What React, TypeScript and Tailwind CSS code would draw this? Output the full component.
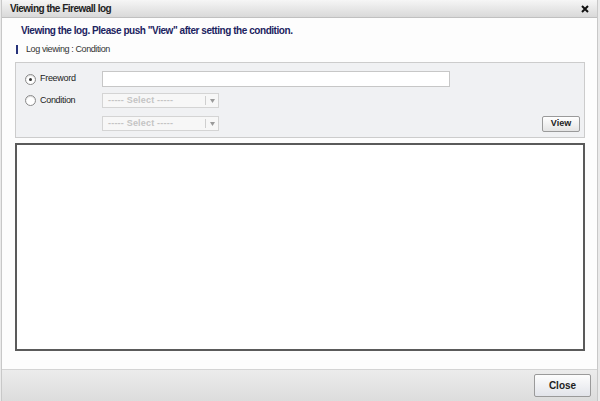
import React from 'react';

const Radio: React.FC<{ checked?: boolean }> = ({ checked }) => (
    <span className="w-[11px] h-[11px] rounded-full border border-[#8a8a8a] bg-white flex items-center justify-center shadow-[inset_0_1px_1px_rgba(0,0,0,0.15)]">
        {checked && <span className="w-[3px] h-[3px] rounded-full bg-[#333]"></span>}
    </span>
);

const Select: React.FC = () => (
    <div className="w-[117px] h-[15px] border border-[#d4d4d4] bg-[#f7f7f7] flex items-center text-[9px] font-bold text-[#c4c4c4]">
        <span className="flex-1 pl-[5px] tracking-[0.2px]">----- Select -----</span>
        <span className="w-px h-[9px] bg-[#cfcfcf]"></span>
        <span className="w-[12px] flex justify-center">
            <svg width="5" height="4" viewBox="0 0 5 4"><path d="M0 0h5L2.5 4z" fill="#9a9a9a" /></svg>
        </span>
    </div>
);

export default function App() {
    return (
        <div className="w-[600px] h-[401px] bg-[#eaeaea] font-['Liberation_Sans',Arial,sans-serif] flex">
            <div className="ml-px w-[597px] h-full border-x border-[#c8c8c8] bg-[#fdfdfd] flex flex-col">
                {/* Title bar */}
                <div className="h-[18px] shrink-0 bg-gradient-to-b from-[#f6f6f6] to-[#d9d9d9] border-b border-[#c0c0c0] flex items-center justify-between pl-[8px] pr-[8px]">
                    <span className="text-[10px] font-bold text-[#222] tracking-[-0.5px]">Viewing the Firewall log</span>
                    <svg width="8" height="8" viewBox="0 0 8 8">
                        <path d="M1 1L7 7M7 1L1 7" stroke="#111" strokeWidth="2" />
                    </svg>
                </div>

                {/* Body */}
                <div className="flex-1 flex flex-col pl-[13px]">
                    <div className="mt-[6px] pl-[6px] text-[10px] font-bold text-[#1c2360] leading-[13px] tracking-[-0.45px]">
                        Viewing the log. Please push "View" after setting the condition.
                    </div>
                    <div className="mt-[7px] flex items-center h-[11px]">
                        <span className="w-[2px] h-[9px] bg-[#27337a] ml-px"></span>
                        <span className="ml-[8px] text-[9px] text-[#333] tracking-[-0.4px]">Log viewing : Condition</span>
                    </div>

                    {/* Condition panel */}
                    <div className="mt-[7px] w-[570px] h-[76px] border border-[#cccccc] bg-[#f0f1f3]">
                        <div className="flex items-center h-[16px] mt-[8px]">
                            <span className="ml-[9px]"><Radio checked /></span>
                            <span className="ml-[4px] w-[62px] text-[9px] text-[#222] tracking-[-0.3px]">Freeword</span>
                            <div className="w-[348px] h-[16px] border border-[#c7c7c7] bg-white"></div>
                        </div>
                        <div className="flex items-center h-[15px] mt-[6px]">
                            <span className="ml-[9px]"><Radio /></span>
                            <span className="ml-[4px] w-[62px] text-[9px] text-[#222] tracking-[-0.3px]">Condition</span>
                            <Select />
                        </div>
                        <div className="flex items-center h-[15px] mt-[8px]">
                            <span className="ml-[86px]"><Select /></span>
                            <div className="ml-auto mr-[4px] w-[38px] h-[16px] rounded-[2px] border border-[#9a9a9a] bg-gradient-to-b from-[#ffffff] to-[#e4e4e4] flex items-center justify-center text-[9px] font-bold text-[#222]">
                                View
                            </div>
                        </div>
                    </div>

                    {/* Log area */}
                    <div className="mt-[5px] w-[570px] h-[208px] border-2 border-[#5a5a5a] bg-white"></div>
                </div>

                {/* Footer */}
                <div className="h-[32px] shrink-0 bg-gradient-to-b from-[#ececec] to-[#dcdcdc] border-t border-[#d4d4d4] flex items-center justify-end pr-[6px]">
                    <div className="w-[57px] h-[23px] rounded-[2px] border border-[#9a9a9a] bg-gradient-to-b from-[#fdfdfd] to-[#e2e4ea] flex items-center justify-center text-[10px] font-bold text-[#222]">
                        Close
                    </div>
                </div>
            </div>
        </div>
    );
}
